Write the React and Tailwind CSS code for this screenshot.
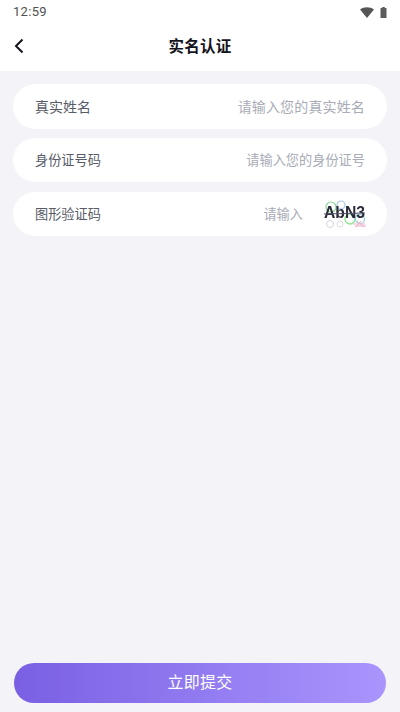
import React from "react";

const FONT = "font-['Roboto','Noto_Sans_CJK_SC',sans-serif]";

const Row = ({ label, placeholder, small, children }) => (
  <div className={`${small ? "h-[44px]" : "h-[45px]"} rounded-full bg-white flex items-center justify-between pl-[22px] pr-[22px]`}>
    <span className={small ? "pt-[1px] text-[13.2px] text-[#595c68]" : "pt-[1px] text-[14px] text-[#595c68]"}>{label}</span>
    <div className="flex items-center">
      <span className={small ? "pt-[1px] text-[13.2px] text-[#a9abb6]" : "pt-[1px] text-[14px] tracking-[0.15px] text-[#a9abb6]"}>{placeholder}</span>
      {children}
    </div>
  </div>
);

// captcha image: the noise is a drawing, the code itself stays real text
const Captcha = () => (
  <svg width="44" height="28" viewBox="0 0 44 28" className="ml-[20px] -mr-[2px] blur-[0.4px]">
    <circle cx="8" cy="7" r="5" fill="none" stroke="#8fd49a" strokeWidth="1.2" />
    <circle cx="18" cy="5" r="4" fill="none" stroke="#a8c8e8" strokeWidth="1.2" />
    <circle cx="27" cy="19" r="5" fill="none" stroke="#8fe890" strokeWidth="1.4" />
    <circle cx="37" cy="19" r="4.5" fill="none" stroke="#90d0e0" strokeWidth="1.2" />
    <circle cx="7" cy="24" r="3.5" fill="none" stroke="#d4d4dc" strokeWidth="1" />
    <circle cx="17" cy="24" r="3" fill="none" stroke="#dcdce4" strokeWidth="1" />
    <path d="M30 24 h12 M32 26 h11 M34 21 l7 6 M38 21 l-5 6" stroke="#eeb0cc" strokeWidth="1" fill="none" />
    <text
      x="1"
      y="18"
      textLength="41"
      lengthAdjust="spacingAndGlyphs"
      fill="#2a2a38"
      className="font-['Liberation_Sans',sans-serif] font-bold text-[17px]"
    >
      AbN3
    </text>
    <line x1="1" y1="14" x2="42" y2="13" stroke="#50506a" strokeWidth="1" />
  </svg>
);

export default function App() {
  return (
    <div className={`${FONT} w-[400px] h-[712px] bg-[#f3f3f8] flex flex-col overflow-hidden`}>
      <div className="bg-white h-[71px] shrink-0 flex flex-col">
        <div className="h-[24px] flex items-center justify-between pl-[13px] pr-[13px]">
          <span className="text-[13px] text-[#505050] tracking-[0.3px]">12:59</span>
          <div className="flex items-center gap-[6px]">
            <svg width="14" height="11" viewBox="0 0 14 11">
              <path d="M0 2.5 C4 -0.6 10 -0.6 14 2.5 L7 11 Z" fill="#555" />
            </svg>
            <svg width="7" height="11" viewBox="0 0 7 11">
              <path d="M2.2 0 H4.8 V1 H6.5 V11 H0.5 V1 H2.2 Z" fill="#5c5c5c" />
            </svg>
          </div>
        </div>
        <div className="relative flex-1 flex items-center justify-center">
          <svg width="12" height="16" viewBox="0 0 12 16" className="absolute left-[13px] top-[14px]">
            <path d="M9.5 1.5 L3 8 L9.5 14.5" stroke="#15151c" strokeWidth="2" fill="none" />
          </svg>
          <span className="text-[15.5px] font-bold text-[#14141c] tracking-[0.2px]">实名认证</span>
        </div>
      </div>
      <div className="flex flex-col gap-[9px] pt-[13px] pl-[13px] pr-[13px]">
        <Row label="真实姓名" placeholder="请输入您的真实姓名" />
        <Row label="身份证号码" placeholder="请输入您的身份证号" small />
        <div className="mt-[1px]">
          <Row label="图形验证码" placeholder="请输入" small>
            <Captcha />
          </Row>
        </div>
      </div>
      <div className="mt-auto pl-[14px] pr-[14px] pb-[9px]">
        <div className="h-[40px] rounded-full bg-gradient-to-r from-[#7a5fe3] to-[#aa95fd] flex items-center justify-center text-white text-[16px] tracking-[0.2px]">
          立即提交
        </div>
      </div>
    </div>
  );
}
